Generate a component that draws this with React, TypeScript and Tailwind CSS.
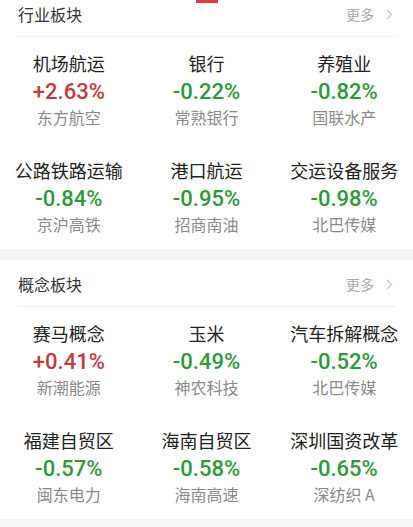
import React from "react"

type Item = { name: string; pct: string; stock: string }

const industry: Item[] = [
  { name: "机场航运", pct: "+2.63%", stock: "东方航空" },
  { name: "银行", pct: "-0.22%", stock: "常熟银行" },
  { name: "养殖业", pct: "-0.82%", stock: "国联水产" },
  { name: "公路铁路运输", pct: "-0.84%", stock: "京沪高铁" },
  { name: "港口航运", pct: "-0.95%", stock: "招商南油" },
  { name: "交运设备服务", pct: "-0.98%", stock: "北巴传媒" },
]

const concept: Item[] = [
  { name: "赛马概念", pct: "+0.41%", stock: "新潮能源" },
  { name: "玉米", pct: "-0.49%", stock: "神农科技" },
  { name: "汽车拆解概念", pct: "-0.52%", stock: "北巴传媒" },
  { name: "福建自贸区", pct: "-0.57%", stock: "闽东电力" },
  { name: "海南自贸区", pct: "-0.58%", stock: "海南高速" },
  { name: "深圳国资改革", pct: "-0.65%", stock: "深纺织 A" },
]

function Cell({ item }: { item: Item }) {
  const up = item.pct.startsWith("+")
  return (
    <div className="flex flex-col items-center">
      <div className="text-[18px] leading-[26px] text-[#222] whitespace-nowrap">{item.name}</div>
      <div
        className={
          "text-[22px] leading-[32px] font-medium font-['Roboto',sans-serif] " +
          (up ? "text-[#c23a3e]" : "text-[#2c9a3a]")
        }
      >
        {item.pct}
      </div>
      <div className="text-[16px] leading-[18px] text-[#8a8a8a] whitespace-nowrap">{item.stock}</div>
    </div>
  )
}

function Section({ title, items, first }: { title: string; items: Item[]; first?: boolean }) {
  return (
    <div className={"bg-white " + (first ? "-mt-[10px]" : "")}>
      <div className="h-[46px] flex items-center justify-between pl-[18px] pr-[20px] pt-[2px]">
        <span className="text-[16px] text-[#333]">{title}</span>
        <span className="flex items-center gap-[12px] text-[14px] text-[#aaa]">
          更多
          <svg width="7" height="11" viewBox="0 0 7 11" fill="none">
            <path d="M1 1l4.5 4.5L1 10" stroke="#c4c4c4" strokeWidth="1.2" />
          </svg>
        </span>
      </div>
      <div className="mx-[17px] h-px bg-[#f0f0f0]" />
      <div className="grid grid-cols-3 gap-y-[31px] pt-[13px] pb-[16px]">
        {items.map((it) => (
          <Cell key={it.name} item={it} />
        ))}
      </div>
    </div>
  )
}

export default function App() {
  return (
    <div className="w-[413px] h-[527px] overflow-hidden bg-[#f5f5f5] font-['Noto_Sans_CJK_SC','Noto_Sans',sans-serif] relative">
      <div className="absolute left-[196px] top-0 w-[22px] h-[3px] bg-[#e33b3b] z-10" />
      <Section title="行业板块" items={industry} first />
      <div className="h-[11px]" />
      <Section title="概念板块" items={concept} />
    </div>
  )
}
